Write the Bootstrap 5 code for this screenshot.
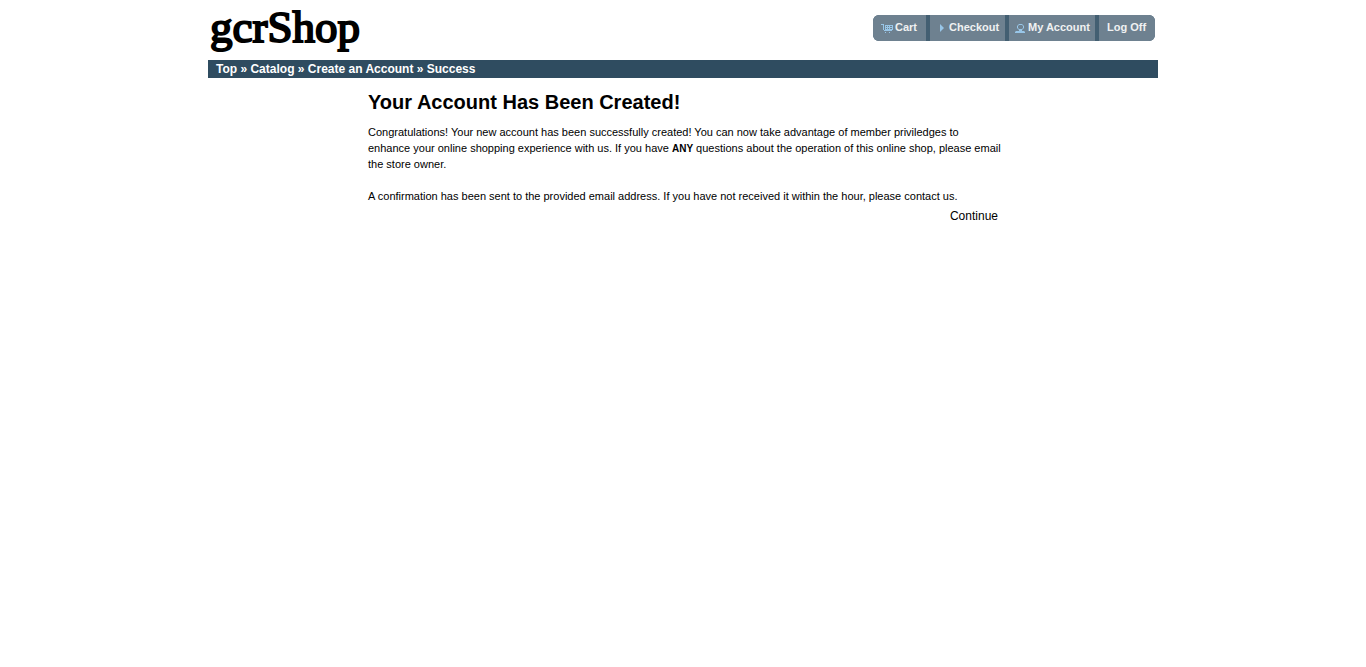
<!DOCTYPE html>
<html lang="en">
<head>
<meta charset="utf-8">
<meta name="viewport" content="width=device-width, initial-scale=1">
<title>gcrShop</title>
<link href="https://cdn.jsdelivr.net/npm/bootstrap@5.3.0/dist/css/bootstrap.min.css" rel="stylesheet">
<style>
body { font-family: "Liberation Sans", Arial, sans-serif; font-size: 11px; line-height: 16px; color: #000; background: #fff; }
a { color: inherit; text-decoration: none; }
.shop-wrap { max-width: 950px; }
.shop-head { min-height: 60px; }
.shop-logo { font-family: "Liberation Serif", serif; font-size: 45px; line-height: 54px; padding-left: 2px; -webkit-text-stroke: 2px #000; }
.shop-tools { gap: 4px; background: #435f72; border-radius: 6px; overflow: hidden; margin: 15px 3px 0 0; }
.shop-tools .btn { --bs-btn-padding-x: 8px; --bs-btn-padding-y: 0; --bs-btn-font-size: 11px; --bs-btn-font-weight: 700; --bs-btn-line-height: 24px; --bs-btn-border-width: 0; --bs-btn-border-radius: 0; --bs-btn-color: #f0f1f2; --bs-btn-bg: #6e8190; --bs-btn-hover-color: #fff; --bs-btn-hover-bg: #5e7180; height: 26px; padding-bottom: 2px; display: flex; align-items: center; white-space: nowrap; }
.shop-tools svg { flex: none; width: 12px; height: 10px; margin: 4px 2px 0 0; fill: #98c6e8; }
.shop-tools .tool-cart { width: 53px; }
.shop-tools .tool-checkout { width: 75px; padding-left: 5px; }
.shop-tools .tool-account { width: 86px; padding-left: 5px; }
.shop-tools .tool-logoff { width: 56px; }
.shop-crumbs { background: #2f4c60; color: #fff; font-size: 12px; line-height: 18px; font-weight: 700; }
.shop-main { max-width: 630px; padding-top: 12px; }
.shop-main h1 { font-size: 20px; line-height: 24px; font-weight: 700; margin-bottom: 10px; }
.shop-main p { margin-right: -4px; }
.shop-main strong { font-size: 10px; line-height: 1; }
.shop-next { font-size: 12px; line-height: 24px; }
</style>
</head>
<body>
<div class="shop-wrap container-fluid px-0">
  <header class="shop-head d-flex justify-content-between align-items-start">
    <a href="#" class="shop-logo">gcrShop</a>
    <nav class="shop-tools d-flex" aria-label="Account">
      <a class="btn tool-cart" href="#"><svg viewBox="0 0 12 10" aria-hidden="true"><path d="M0 0h3v1H0zM2 1h1v5H2zM3 6h8v1H3zM4 1h8v1H4zM4 3h8v1H4zM4 5h8v1H4zM4 1h1v4H4zM6 1h1v4H6zM8 1h1v4H8zM11 1h1v4h-1zM4 8h1v1H4zM8 8h1v1H8z"/></svg>Cart</a>
      <a class="btn tool-checkout" href="#"><svg viewBox="0 0 12 10" aria-hidden="true"><path d="M5 0l4 4-4 4z"/></svg>Checkout</a>
      <a class="btn tool-account" href="#"><svg viewBox="0 0 12 10" aria-hidden="true"><path d="M5 0h3l1 1 1 1v2L8 6v1h2l1 1v1H1V8l1-1h3V6L3 4V2l1-1zM5 1L4 2v2l1 1h3l1-1V2L8 1z" fill-rule="evenodd"/></svg>My Account</a>
      <a class="btn tool-logoff" href="#">Log Off</a>
    </nav>
  </header>
  <nav class="shop-crumbs px-2" aria-label="Breadcrumb"><a href="#">Top</a> » <a href="#">Catalog</a> » <a href="#">Create an Account</a> » <a href="#">Success</a></nav>
  <main class="shop-main mx-auto">
    <h1>Your Account Has Been Created!</h1>
    <p class="mb-3">Congratulations! Your new account has been successfully created! You can now take advantage of member priviledges to enhance your online shopping experience with us. If you have <strong>ANY</strong> questions about the operation of this online shop, please email the <a href="#">store owner</a>.</p>
    <p class="mb-0">A confirmation has been sent to the provided email address. If you have not received it within the hour, please <a href="#">contact us</a>.</p>
    <div class="shop-next text-end"><a href="#">Continue</a></div>
  </main>
</div>
<script src="https://cdn.jsdelivr.net/npm/bootstrap@5.3.0/dist/js/bootstrap.bundle.min.js"></script>
</body>
</html>
